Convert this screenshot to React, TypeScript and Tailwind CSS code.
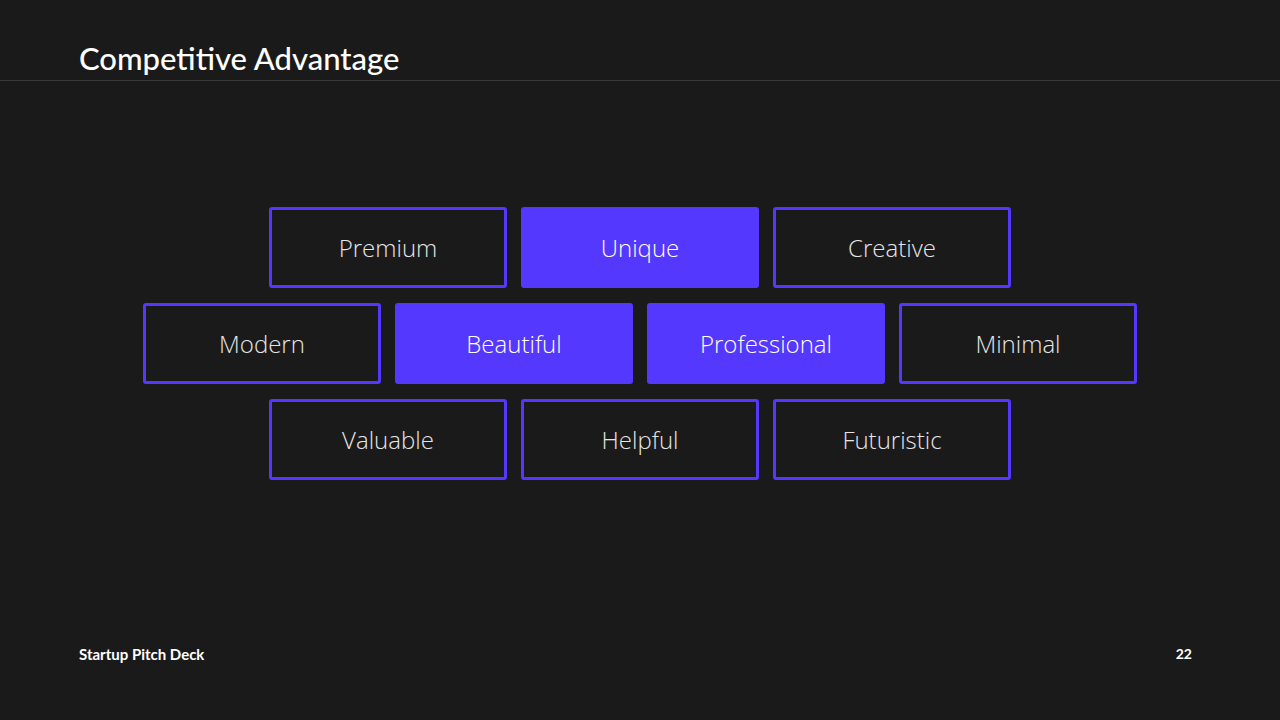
const rows: { label: string; filled?: boolean }[][] = [
  [{ label: "Premium" }, { label: "Unique", filled: true }, { label: "Creative" }],
  [{ label: "Modern" }, { label: "Beautiful", filled: true }, { label: "Professional", filled: true }, { label: "Minimal" }],
  [{ label: "Valuable" }, { label: "Helpful" }, { label: "Futuristic" }],
]

export default function App() {
  return (
    <div className="w-[1280px] h-[720px] bg-[#1a1a1a] flex flex-col overflow-hidden">
      <div className="h-[81px] border-b border-[#3a3a3a] px-[79px] flex items-end pb-[6px]">
        <h1 className="text-white text-[31px] font-medium leading-none" style={{ fontFamily: "Lato, 'Noto Sans', sans-serif" }}>
          Competitive Advantage
        </h1>
      </div>
      <div className="flex-1 flex flex-col items-center justify-center gap-[15px] pt-[1px]">
        {rows.map((row, i) => (
          <div key={i} className="flex gap-[14px]">
            {row.map((b) => (
              <div
                key={b.label}
                className={
                  "w-[238px] h-[81px] rounded-[3px] border-[3px] border-[#5538fd] flex items-center justify-center text-[24px] font-light " +
                  (b.filled ? "bg-[#5538fd] text-white" : "text-[#e6e6e6]")
                }
                style={{ fontFamily: "'Open Sans', sans-serif" }}
              >
                {b.label}
              </div>
            ))}
          </div>
        ))}
      </div>
      <div className="h-[115px] px-[79px] flex justify-between items-start pt-[38px] pr-[88px] text-white text-[15px] font-bold" style={{ fontFamily: "Lato, sans-serif" }}>
        <span>Startup Pitch Deck</span>
        <span className="text-[14px]">22</span>
      </div>
    </div>
  )
}
